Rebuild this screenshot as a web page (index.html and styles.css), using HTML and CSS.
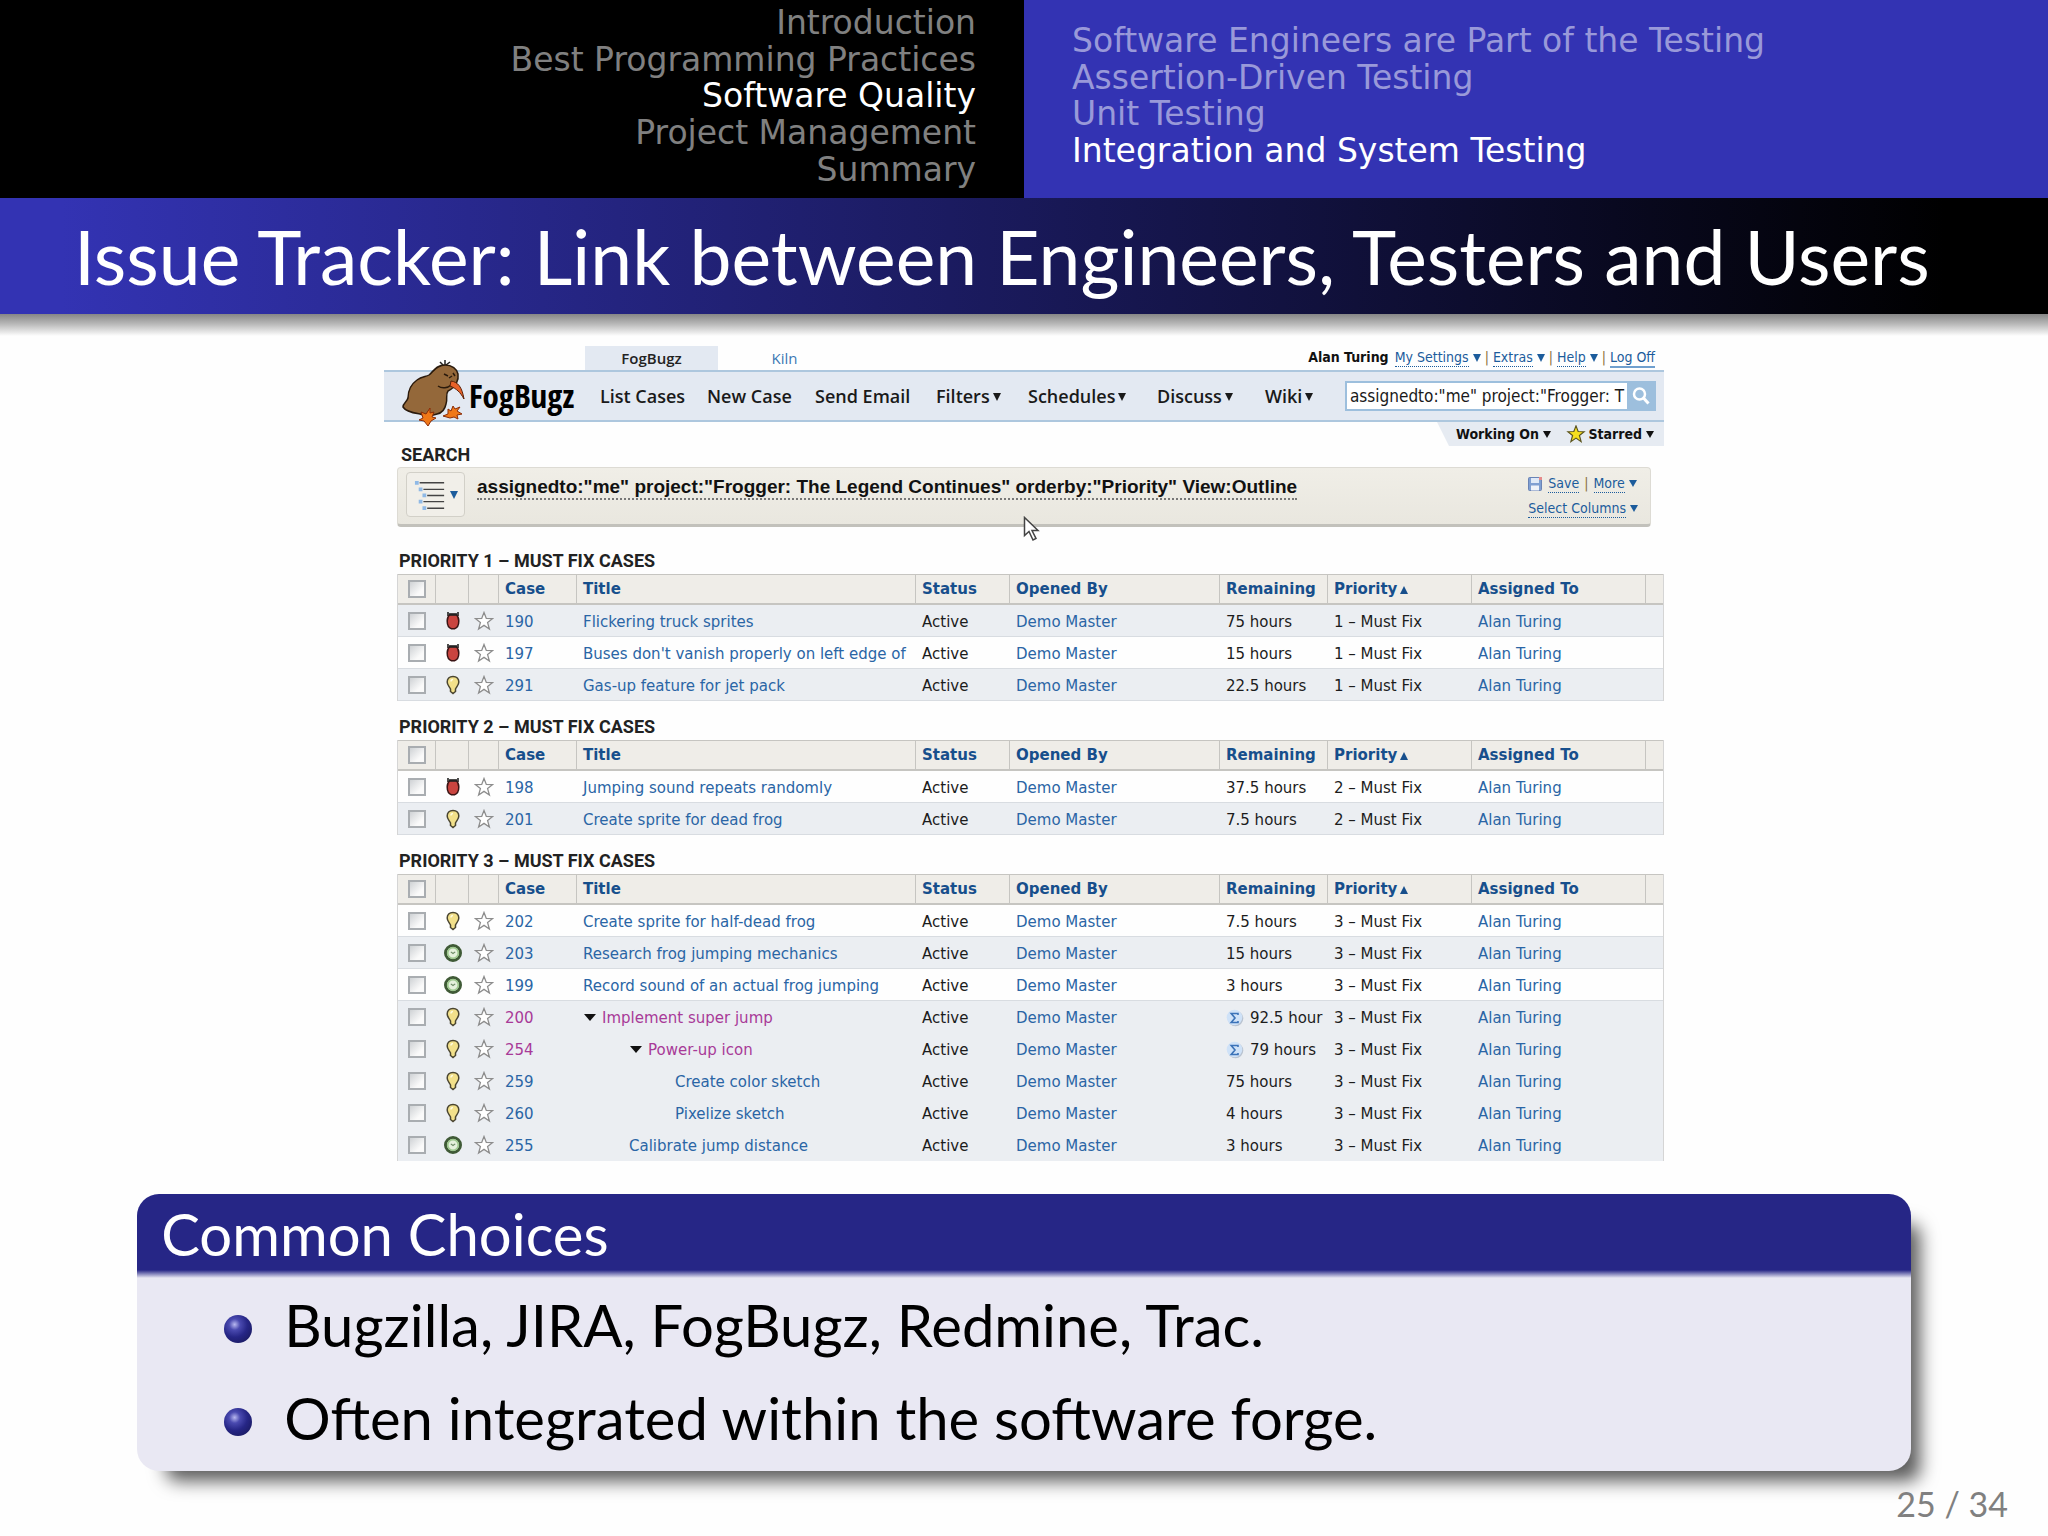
FILE: index.html
```html
<!DOCTYPE html>
<html lang="en">
<head>
<meta charset="utf-8">
<title>Issue Tracker: Link between Engineers, Testers and Users</title>
<link rel="stylesheet" href="styles.css">
</head>
<body>
<svg class="sprite" aria-hidden="true">
  <symbol id="star" viewBox="0 0 20 20"><path d="M10 1.5l2.3 5.9 6.2.3-4.9 3.9 1.8 6.4-5.4-3.6-5.4 3.6 1.8-6.4L1.500 7.700l6.200-.3z" fill="#fff" stroke="#8d8d8d" stroke-width="1.300"/></symbol>
  <symbol id="bug" viewBox="0 0 16 20"><path d="M3 1v4M13 1v4" stroke="#222" stroke-width="1.600"/><path d="M5 3.500h6c2 1.500 2.800 3.500 2.800 6.500 0 4-2 7-4.300 7.800h-3C4.200 17 2.200 14 2.200 10c0-3 .8-5 2.800-6.500z" fill="#c9443f" stroke="#3a1414" stroke-width="1.500"/><path d="M4 3.500h8" stroke="#222" stroke-width="2.500"/></symbol>
  <symbol id="bulb" viewBox="0 0 16 20"><path d="M8 1.500c3.800 0 5.800 2.500 5.800 5.500 0 3-2.200 4.500-3.300 7v2.500L8 18.500l-2.500-2V14c-1.100-2.500-3.300-4-3.300-7 0-3 2-5.500 5.800-5.500z" fill="#f2e08a" stroke="#4a4530" stroke-width="1.500"/><path d="M6 6.500c0-1.500 1-2 2-2" stroke="#fffbe0" stroke-width="1.500" fill="none"/></symbol>
  <symbol id="clock" viewBox="0 0 18 18"><circle cx="9" cy="9" r="6.800" fill="#e4f0dc" stroke="#3f5a36" stroke-width="2.600"/><circle cx="9" cy="9" r="4.800" fill="none" stroke="#9cc78c" stroke-width="1.500"/><path d="M7 8l2 1.500L11 8" stroke="#6d8a66" fill="none"/></symbol>
  <symbol id="sum" viewBox="0 0 18 18"><circle cx="9.500" cy="9.500" r="7.800" fill="#b9c3d0"/><circle cx="8.500" cy="8.500" r="7.800" fill="#cfe2f8"/><path d="M12 6V4.500H5.200L9 9l-3.800 4.500H12V12" fill="none" stroke="#3c73b8" stroke-width="1.600"/></symbol>
</svg>

<header class="topbar">
  <nav class="sections" aria-label="Sections">
    <a href="#">Introduction</a>
    <a href="#">Best Programming Practices</a>
    <a href="#" class="current">Software Quality</a>
    <a href="#">Project Management</a>
    <a href="#">Summary</a>
  </nav>
  <nav class="subsections" aria-label="Subsections">
    <a href="#">Software Engineers are Part of the Testing</a>
    <a href="#">Assertion-Driven Testing</a>
    <a href="#">Unit Testing</a>
    <a href="#" class="current">Integration and System Testing</a>
  </nav>
</header>
<h1 class="frametitle">Issue Tracker: Link between Engineers, Testers and Users</h1>
<div class="title-shadow"></div>

<main>
<section class="app" aria-label="FogBugz">
  <div class="util">
    <a href="#" class="tab tab-on">FogBugz</a>
    <a href="#" class="tab">Kiln</a>
    <div class="account">
      <b>Alan Turing</b>
      <span><a href="#">My Settings</a><i class="caret"></i></span><span class="bar">|</span>
      <span><a href="#">Extras</a><i class="caret"></i></span><span class="bar">|</span>
      <span><a href="#">Help</a><i class="caret"></i></span><span class="bar">|</span>
      <span><a href="#" class="solid">Log Off</a></span>
    </div>
  </div>

  <div class="menubar">
    <svg class="kiwi" viewBox="0 0 64 66" aria-hidden="true">
      <path d="M42 6l-4-4M43 5V0M44 5l4-3" stroke="#222" stroke-width="1.500"/>
      <path d="M43 5c7 0 12 4 13 9 1 6-2 13-10 17-3 4 0 8-2 13-1 5-4 9-9 10-6 2-12 2-17 0-6-1-14-2-17-7 0-4 4-5 5-9 0-7 2-13 9-18 5-4 9-3 12-5 4-3 7-10 16-10z" fill="#94683a" stroke="#2a1a0c" stroke-width="1.500"/>
      <path d="M42 14l4 2M51 13l2 3M47 18l3-2M36 26c4 3 10 2 13-1" stroke="#2a1a0c" stroke-width="1.500" fill="none"/>
      <path d="M49 21c7 1 11 6 13 18-4-7-7-10-14-13z" fill="#e8622a" stroke="#5a2108" stroke-width="1"/>
      <path d="M28 48l-4 6-5-2 2 6-4 2 5 1 4 5 3-5 5-3-4-1 2-5-4 1z" fill="#f07818" stroke="#8a2c08"/>
      <path d="M51 46l-2 5-3-2v5l-5 2 7 2 4-1 4 2-1-4 5-1-5-3 3-4-5 2z" fill="#f07818" stroke="#8a2c08"/>
    </svg>
    <span class="brand">FogBugz</span>
    <nav class="menu" aria-label="Main">
      <a href="#">List Cases</a>
      <a href="#">New Case</a>
      <a href="#">Send Email</a>
      <a href="#">Filters<i class="caret"></i></a>
      <a href="#">Schedules<i class="caret"></i></a>
      <a href="#">Discuss<i class="caret"></i></a>
      <a href="#">Wiki<i class="caret"></i></a>
    </nav>
    <form class="search">
      <input type="text" aria-label="Search cases" value="assignedto:&quot;me&quot; project:&quot;Frogger: T">
      <button type="button" aria-label="Search"><svg viewBox="0 0 20 20"><circle cx="8.500" cy="8" r="5.500" fill="none" stroke="#fff" stroke-width="2.500"/><path d="M12.500 12l5 5.500" stroke="#fff" stroke-width="3"/></svg></button>
    </form>
  </div>

  <div class="quick">
    <a href="#">Working On<i class="caret"></i></a>
    <a href="#"><svg viewBox="0 0 20 20"><path d="M10 1l2.400 6.200 6.600.3-5.200 4.100 1.900 6.900-5.700-3.900-5.700 3.900 1.900-6.900L1 7.500l6.600-.3z" fill="#f6df1d" stroke="#5b5420" stroke-width="1.300"/></svg>Starred<i class="caret"></i></a>
  </div>

  <div class="content">
    <h2 class="label">SEARCH</h2>
    <div class="filter">
      <button type="button" class="viewmode" aria-label="View">
        <svg viewBox="0 0 32 34"><path d="M5 4h26M9 11h22M13 17.500h18M9 24h22M13 31h18" stroke="#444" stroke-width="1.500"/><path d="M0 4h4M4 11h4M8 17.500h4M4 24h4M8 31h4" stroke="#8fb9e6" stroke-width="4"/></svg>
        <i class="caret"></i>
      </button>
      <div class="query">assignedto:"me" project:"Frogger: The Legend Continues" orderby:"Priority" View:Outline</div>
      <div class="actions">
        <div><svg viewBox="0 0 14 14"><rect x=".5" y=".5" width="13" height="13" rx="1" fill="#7f9fd2" stroke="#6a83b5"/><rect x="3" y="1" width="8" height="5" fill="#dfe9f7"/><rect x="3" y="8.500" width="8" height="5" fill="#eef2f9"/><rect x="11" y="0" width="3" height="3" fill="#e58a8a"/></svg><a href="#">Save</a><span class="bar">|</span><a href="#">More</a><i class="caret"></i></div>
        <div><a href="#">Select Columns</a><i class="caret"></i></div>
      </div>
      <svg class="pointer" viewBox="0 0 18 26" aria-hidden="true"><path d="M1.500 1.500v18l4.500-4 4 8.500 3-1.500-4-8h6z" fill="#fff" stroke="#444" stroke-width="1.500"/></svg>
    </div>

    <h2 class="label group first">PRIORITY 1 – MUST FIX CASES</h2>
    <table class="cases">
      <colgroup><col class="c-check"><col class="c-kind"><col class="c-star"><col class="c-case"><col class="c-title"><col class="c-status"><col class="c-opened"><col class="c-rem"><col class="c-prio"><col class="c-who"><col class="c-end"></colgroup>
      <thead><tr><th><input type="checkbox" aria-label="Select all"></th><th></th><th></th><th>Case</th><th>Title</th><th>Status</th><th>Opened By</th><th>Remaining</th><th>Priority<i class="caret up"></i></th><th>Assigned To</th><th></th></tr></thead>
      <tbody>
        <tr class="alt"><td><input type="checkbox" aria-label="Case 190"></td><td><svg><use href="#bug"/></svg></td><td><svg><use href="#star"/></svg></td><td><a href="#">190</a></td><td><a href="#">Flickering truck sprites</a></td><td>Active</td><td><a href="#">Demo Master</a></td><td>75 hours</td><td>1 – Must Fix</td><td><a href="#">Alan Turing</a></td><td></td></tr>
        <tr><td><input type="checkbox" aria-label="Case 197"></td><td><svg><use href="#bug"/></svg></td><td><svg><use href="#star"/></svg></td><td><a href="#">197</a></td><td><a href="#">Buses don't vanish properly on left edge of</a></td><td>Active</td><td><a href="#">Demo Master</a></td><td>15 hours</td><td>1 – Must Fix</td><td><a href="#">Alan Turing</a></td><td></td></tr>
        <tr class="alt"><td><input type="checkbox" aria-label="Case 291"></td><td><svg><use href="#bulb"/></svg></td><td><svg><use href="#star"/></svg></td><td><a href="#">291</a></td><td><a href="#">Gas-up feature for jet pack</a></td><td>Active</td><td><a href="#">Demo Master</a></td><td>22.5 hours</td><td>1 – Must Fix</td><td><a href="#">Alan Turing</a></td><td></td></tr>
      </tbody>
    </table>

    <h2 class="label group">PRIORITY 2 – MUST FIX CASES</h2>
    <table class="cases">
      <colgroup><col class="c-check"><col class="c-kind"><col class="c-star"><col class="c-case"><col class="c-title"><col class="c-status"><col class="c-opened"><col class="c-rem"><col class="c-prio"><col class="c-who"><col class="c-end"></colgroup>
      <thead><tr><th><input type="checkbox" aria-label="Select all"></th><th></th><th></th><th>Case</th><th>Title</th><th>Status</th><th>Opened By</th><th>Remaining</th><th>Priority<i class="caret up"></i></th><th>Assigned To</th><th></th></tr></thead>
      <tbody>
        <tr><td><input type="checkbox" aria-label="Case 198"></td><td><svg><use href="#bug"/></svg></td><td><svg><use href="#star"/></svg></td><td><a href="#">198</a></td><td><a href="#">Jumping sound repeats randomly</a></td><td>Active</td><td><a href="#">Demo Master</a></td><td>37.5 hours</td><td>2 – Must Fix</td><td><a href="#">Alan Turing</a></td><td></td></tr>
        <tr class="alt"><td><input type="checkbox" aria-label="Case 201"></td><td><svg><use href="#bulb"/></svg></td><td><svg><use href="#star"/></svg></td><td><a href="#">201</a></td><td><a href="#">Create sprite for dead frog</a></td><td>Active</td><td><a href="#">Demo Master</a></td><td>7.5 hours</td><td>2 – Must Fix</td><td><a href="#">Alan Turing</a></td><td></td></tr>
      </tbody>
    </table>

    <h2 class="label group">PRIORITY 3 – MUST FIX CASES</h2>
    <table class="cases">
      <colgroup><col class="c-check"><col class="c-kind"><col class="c-star"><col class="c-case"><col class="c-title"><col class="c-status"><col class="c-opened"><col class="c-rem"><col class="c-prio"><col class="c-who"><col class="c-end"></colgroup>
      <thead><tr><th><input type="checkbox" aria-label="Select all"></th><th></th><th></th><th>Case</th><th>Title</th><th>Status</th><th>Opened By</th><th>Remaining</th><th>Priority<i class="caret up"></i></th><th>Assigned To</th><th></th></tr></thead>
      <tbody>
        <tr><td><input type="checkbox" aria-label="Case 202"></td><td><svg><use href="#bulb"/></svg></td><td><svg><use href="#star"/></svg></td><td><a href="#">202</a></td><td><a href="#">Create sprite for half-dead frog</a></td><td>Active</td><td><a href="#">Demo Master</a></td><td>7.5 hours</td><td>3 – Must Fix</td><td><a href="#">Alan Turing</a></td><td></td></tr>
        <tr class="alt"><td><input type="checkbox" aria-label="Case 203"></td><td><svg><use href="#clock"/></svg></td><td><svg><use href="#star"/></svg></td><td><a href="#">203</a></td><td><a href="#">Research frog jumping mechanics</a></td><td>Active</td><td><a href="#">Demo Master</a></td><td>15 hours</td><td>3 – Must Fix</td><td><a href="#">Alan Turing</a></td><td></td></tr>
        <tr><td><input type="checkbox" aria-label="Case 199"></td><td><svg><use href="#clock"/></svg></td><td><svg><use href="#star"/></svg></td><td><a href="#">199</a></td><td><a href="#">Record sound of an actual frog jumping</a></td><td>Active</td><td><a href="#">Demo Master</a></td><td>3 hours</td><td>3 – Must Fix</td><td><a href="#">Alan Turing</a></td><td></td></tr>
        <tr class="alt tree visited"><td><input type="checkbox" aria-label="Case 200"></td><td><svg><use href="#bulb"/></svg></td><td><svg><use href="#star"/></svg></td><td><a href="#">200</a></td><td><i class="caret fold"></i><a href="#">Implement super jump</a></td><td>Active</td><td><a href="#">Demo Master</a></td><td><svg class="sum"><use href="#sum"/></svg>92.5 hour</td><td>3 – Must Fix</td><td><a href="#">Alan Turing</a></td><td></td></tr>
        <tr class="alt tree visited"><td><input type="checkbox" aria-label="Case 254"></td><td><svg><use href="#bulb"/></svg></td><td><svg><use href="#star"/></svg></td><td><a href="#">254</a></td><td class="in-1"><i class="caret fold"></i><a href="#">Power-up icon</a></td><td>Active</td><td><a href="#">Demo Master</a></td><td><svg class="sum"><use href="#sum"/></svg>79 hours</td><td>3 – Must Fix</td><td><a href="#">Alan Turing</a></td><td></td></tr>
        <tr class="alt tree"><td><input type="checkbox" aria-label="Case 259"></td><td><svg><use href="#bulb"/></svg></td><td><svg><use href="#star"/></svg></td><td><a href="#">259</a></td><td class="in-2"><a href="#">Create color sketch</a></td><td>Active</td><td><a href="#">Demo Master</a></td><td>75 hours</td><td>3 – Must Fix</td><td><a href="#">Alan Turing</a></td><td></td></tr>
        <tr class="alt tree"><td><input type="checkbox" aria-label="Case 260"></td><td><svg><use href="#bulb"/></svg></td><td><svg><use href="#star"/></svg></td><td><a href="#">260</a></td><td class="in-2"><a href="#">Pixelize sketch</a></td><td>Active</td><td><a href="#">Demo Master</a></td><td>4 hours</td><td>3 – Must Fix</td><td><a href="#">Alan Turing</a></td><td></td></tr>
        <tr class="alt tree"><td><input type="checkbox" aria-label="Case 255"></td><td><svg><use href="#clock"/></svg></td><td><svg><use href="#star"/></svg></td><td><a href="#">255</a></td><td class="in-1"><a href="#">Calibrate jump distance</a></td><td>Active</td><td><a href="#">Demo Master</a></td><td>3 hours</td><td>3 – Must Fix</td><td><a href="#">Alan Turing</a></td><td></td></tr>
      </tbody>
    </table>
  </div>
</section>

<section class="block">
  <h2>Common Choices</h2>
  <ul>
    <li>Bugzilla, JIRA, FogBugz, Redmine, Trac.</li>
    <li>Often integrated within the software forge.</li>
  </ul>
</section>
</main>
<footer class="pageno">25 / 34</footer>
</body>
</html>
```
FILE: styles.css
```css
* { box-sizing: border-box; }
body { margin: 0; background: #fefefe; color: #000; font-family: Lato, sans-serif; }
h1, h2, ul { margin: 0; padding: 0; font-weight: 400; }
a { text-decoration: none; color: inherit; }
.sprite { position: absolute; width: 0; height: 0; }

/* slide header */
.topbar { display: grid; grid-template-columns: 1fr 1fr; height: 198px; font: 33px/36px "DejaVu Sans", sans-serif; }
.topbar nav { display: grid; grid-auto-rows: 1fr; align-items: center; }
.sections { background: #000; color: #808080; text-align: right; padding: 5px 48px 10px 0; }
.subsections { background: #3333b3; color: #9999d9; padding: 23px 0 29px 48px; }
.topbar .current { color: #fff; }
.frametitle { padding-left: 74px; color: #fff; font-size: 75px; line-height: 116px; white-space: nowrap; background: linear-gradient(90deg, #3333b3 3%, #191959 50%, #000 95%); }
.title-shadow { height: 22px; background: linear-gradient(#868686, #b8b8b8 45%, #fefefe); }

/* tracker */
.app { width: 62.5%; margin: 0 auto; padding-top: 10px; font: 15px/20px "DejaVu Sans", sans-serif; color: #1c1c1c; }
.caret { display: inline-block; margin-left: 4px; border: 4px solid transparent; border-top: 8px solid currentColor; border-bottom: 0; }
.caret.up { border-top: 0; border-bottom: 8px solid currentColor; }
.util { display: flex; height: 24px; padding: 0 9px 0 201px; }
.tab { width: 133px; text-align: center; font: 15px/24px "Open Sans", sans-serif; color: #3c78b4; }
.tab-on { background: #e3e9f2; color: #222; font-weight: 600; }
.account { margin-left: auto; display: flex; gap: 4px; font: 14px/20px "DejaVu Sans Condensed", "DejaVu Sans", sans-serif; padding-top: 1px; color: #1c5c9c; }
.account b { color: #111; margin-right: 2px; }
.account a, .actions a { display: inline-block; line-height: 17px; border-bottom: 1px dotted #1c5c9c; }
.account .solid { border-bottom: 2px solid #6f9fce; }
.bar { color: #8a6d3b; }
.menubar { position: relative; display: flex; align-items: center; height: 52px; padding: 0 8px 0 85px; background: #e3e9f2; border: solid #adc7de; border-width: 2px 0; }
.kiwi { position: absolute; left: 18px; top: -12px; width: 64px; height: 66px; }
.brand { width: 131px; font: 700 33px/46px "Open Sans Condensed", "Open Sans", sans-serif; color: #000; }
.menu { flex: 1; display: grid; grid-template-columns: 107fr 108fr 121fr 92fr 129fr 108fr 80fr; font: 600 18px/24px "Open Sans", sans-serif; color: #1a1a1a; white-space: nowrap; }
.menu a { min-width: 0; }
.menu .caret { margin-left: 3px; margin-bottom: 2px; }
.search { display: flex; width: 311px; height: 30px; border: 2px solid #9dbfdd; background: #fff; }
.search input { flex: 1; min-width: 0; border: 0; padding: 0 0 0 3px; background: none; color: #1a1a1a; font: 17px/26px "DejaVu Sans Condensed", "DejaVu Sans", sans-serif; }
.search button { width: 27px; border: 0; padding: 3px; background: #9dbfdd; }
.search svg { display: block; width: 22px; height: 20px; }
.quick { display: flex; justify-content: space-between; width: 227px; height: 24px; margin-left: auto; padding: 0 10px 0 19px; background: #e6ebf2; clip-path: polygon(0 0, 100% 0, 100% 100%, 12px 100%); font: 700 14px/24px "DejaVu Sans Condensed", "DejaVu Sans", sans-serif; color: #111; }
.quick a { display: flex; align-items: center; }
.quick svg { width: 20px; height: 18px; margin-right: 2px; }
.quick .caret, .actions .caret { border-top-width: 7px; }
.content { padding-left: 13px; }
.label { padding: 0 4px 3px; font: 700 18px/18px Roboto, sans-serif; color: #222; }
.label.group { padding: 17px 2px 4px; }
.label.first { margin-top: 8px; }
.filter { position: relative; display: flex; align-items: flex-start; height: 60px; margin-right: 13px; padding: 3px 12px 0 8px; border: 1px solid #dddbd4; border-bottom: 3px solid #c2c1bb; border-radius: 4px; background: linear-gradient(#f0eee7, #e9e7df); }
.viewmode { display: flex; align-items: center; justify-content: center; width: 59px; height: 45px; margin: 1px 12px 0 0; padding: 0; border: 1px solid #d2d0c8; border-radius: 4px; background: #f1efe9; color: #1c5c9c; }
.viewmode svg { width: 32px; height: 32px; }
.query { margin-top: 5px; border-bottom: 2px dotted #777; font: 700 19px/22px "Liberation Sans", sans-serif; color: #111; white-space: nowrap; }
.actions { margin-left: auto; font: 14px/25px "DejaVu Sans Condensed", "DejaVu Sans", sans-serif; color: #1c5c9c; }
.actions div { display: flex; align-items: center; height: 25px; }
.actions svg { width: 14px; height: 14px; margin-right: 6px; }
.actions .bar { margin: 0 5px; }
.pointer { position: absolute; left: 625px; top: 48px; width: 18px; height: 26px; }

/* case lists */
.cases { width: 100%; table-layout: fixed; border-collapse: separate; border-spacing: 0; border: solid #d5d5d5; border-width: 0 1px; }
.c-check { width: 38px; } .c-kind { width: 33px; } .c-star { width: 30px; } .c-case { width: 78px; }
.c-status { width: 94px; } .c-opened { width: 210px; } .c-rem { width: 108px; } .c-prio { width: 144px; }
.c-who { width: 174px; } .c-end { width: 17px; }
.cases th, .cases td { padding: 0 0 0 6px; text-align: left; vertical-align: middle; white-space: nowrap; overflow: hidden; }
.cases th { height: 31px; background: #efede8; color: #174f8c; border: solid #c6c5c1; border-width: 1px 1px 2px 0; }
.cases th:last-child { border-right: 0; }
.cases td { height: 32px; padding-top: 2px; border-bottom: 1px solid #d8dce1; }
.cases .alt td { background: #ebeef2; }
.cases .tree td { border-bottom-color: #ebeef2; }
.cases a { color: #2a65a5; }
.cases .visited td:nth-child(4) a, .cases .visited td:nth-child(5) a { color: #a83a98; }
.cases th:nth-child(-n+3), .cases td:nth-child(-n+3) { padding: 0; text-align: center; }
.cases svg { display: block; width: 20px; height: 20px; margin: 0 auto; }
.cases td .sum { display: inline-block; width: 18px; height: 18px; margin: 0 6px 0 0; vertical-align: -4px; }
.cases input { appearance: none; display: block; width: 18px; height: 18px; margin: 0 auto; border: 2px solid #a9adb1; background: linear-gradient(135deg, #cfd2d5, #fafafa 70%); }
.caret.fold { margin: 0 6px 2px 1px; border-width: 7px 6px 0; color: #111; }
.cases td.in-1 { padding-left: 52px; }
.cases td.in-2 { padding-left: 98px; }
.cases .up { border-width: 0 4px 8px; margin-left: 3px; }

/* beamer block */
.block { margin: 33px 6.7% 0; border-radius: 22px; background: #e9e8f3; box-shadow: 19px 20px 18px -10px rgba(0, 0, 0, .65); }
.block h2 { height: 84px; padding: 5px 24px 0; border-radius: 22px 22px 0 0; color: #fff; font-size: 58px; line-height: 70px; background: linear-gradient(#262686 76px, #e9e8f3 84px); }
.block ul { list-style: none; padding: 0 0 7px 87px; font-size: 58px; line-height: 93px; }
.block li { display: flex; align-items: center; gap: 32px; }
.block li::before { content: ""; width: 28px; height: 28px; margin-top: 8px; border-radius: 50%; background: radial-gradient(circle at 38% 34%, #b8b8f0 0, #4a4ab0 22%, #262686 50%, #15154f 100%); }
.pageno { padding: 13px 40px 0 0; text-align: right; font-size: 34px; line-height: 40px; color: #808080; }
```
